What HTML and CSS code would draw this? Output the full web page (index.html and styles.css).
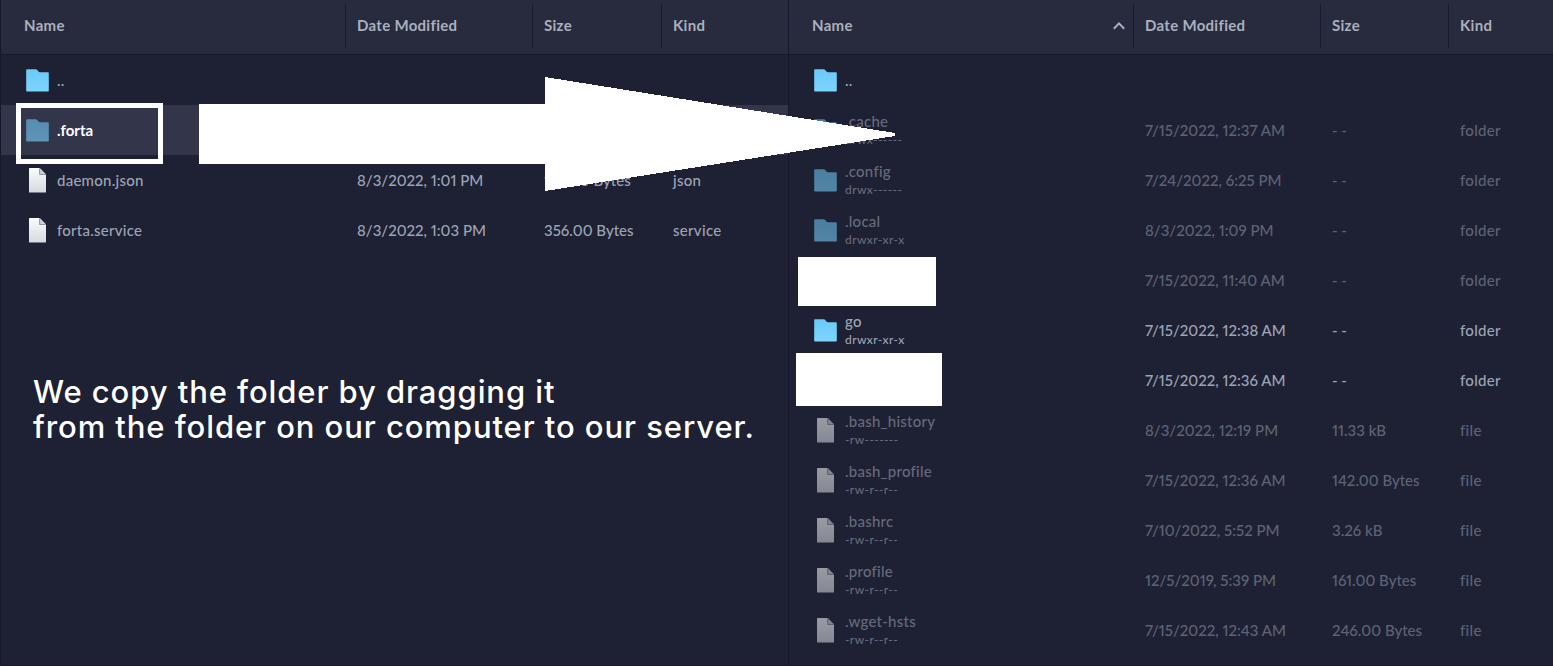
FILE: index.html
```html
<!DOCTYPE html>
<html lang="en">
<head>
<meta charset="utf-8">
<title>File transfer</title>
<link rel="stylesheet" href="styles.css">
</head>
<body>
<svg class="defs" width="0" height="0">
  <defs>
    <linearGradient id="blue" x1="0" y1="0" x2="0" y2="1"><stop offset="0" stop-color="#6bcaf8"/><stop offset="1" stop-color="#7dd4fd"/></linearGradient>
    <linearGradient id="paper" x1="0" y1="0" x2="0" y2="1"><stop offset="0" stop-color="#fbfcfd"/><stop offset="1" stop-color="#d3dade"/></linearGradient>
    <symbol id="folder" viewBox="0 0 24 24"><path fill="url(#blue)" d="M1 .3H9.8Q10.6 .3 11.2 1L12.2 2.2Q13 3.2 14 3.2H22Q22.8 3.2 22.8 4V21.7Q22.8 22.5 22 22.5H1Q.2 22.5 .2 21.7V1.1Q.2 .3 1 .3Z"/></symbol>
    <symbol id="file" viewBox="0 0 24 26"><path fill="url(#paper)" d="M3.6 0H13.6L20 6.5V24.2Q20 24.6 19.6 24.6H3.6Q3 24.6 3 24.2V.5Q3 0 3.6 0Z"/><path fill="#c8d0d6" d="M13.6 0L20 6.5H13.6Z"/><path fill="none" stroke="#6c7682" stroke-width=".7" d="M13.6 .3V6.5L19.8 6.5"/></symbol>
  </defs>
</svg>
<main class="app">
  <section class="pane local">
    <header class="grid head"><div>Name</div><div>Date Modified</div><div>Size</div><div>Kind</div></header>
    <div class="grid row"><div class="name"><svg class="icon"><use href="#folder"/></svg><span class="label dots">..</span></div></div>
    <div class="grid row selected"><div class="name"><svg class="icon faded"><use href="#folder"/></svg><span class="label">.forta</span></div></div>
    <div class="grid row"><div class="name"><svg class="icon"><use href="#file"/></svg><span class="label">daemon.json</span></div><div class="date">8/3/2022, 1:01 PM</div><div class="size">172.00 Bytes</div><div>json</div></div>
    <div class="grid row"><div class="name"><svg class="icon"><use href="#file"/></svg><span class="label">forta.service</span></div><div class="date">8/3/2022, 1:03 PM</div><div class="size">356.00 Bytes</div><div>service</div></div>
  </section>
  <section class="pane remote">
    <header class="grid head"><div class="sorted">Name<svg class="caret" viewBox="0 0 14 10"><path d="M1.8 7.8L7 2.4L12.2 7.8"/></svg></div><div>Date Modified</div><div>Size</div><div>Kind</div></header>
    <div class="grid row"><div class="name"><svg class="icon"><use href="#folder"/></svg><span class="label dots">..</span></div></div>
    <div class="grid row dim"><div class="name"><svg class="icon"><use href="#folder"/></svg><span class="label">.cache<small>drwx------</small></span></div><div class="date">7/15/2022, 12:37 AM</div><div class="size">- -</div><div>folder</div></div>
    <div class="grid row dim"><div class="name"><svg class="icon"><use href="#folder"/></svg><span class="label">.config<small>drwx------</small></span></div><div class="date">7/24/2022, 6:25 PM</div><div class="size">- -</div><div>folder</div></div>
    <div class="grid row dim"><div class="name"><svg class="icon"><use href="#folder"/></svg><span class="label">.local<small>drwxr-xr-x</small></span></div><div class="date">8/3/2022, 1:09 PM</div><div class="size">- -</div><div>folder</div></div>
    <div class="grid row dim"><div class="name"></div><div class="date">7/15/2022, 11:40 AM</div><div class="size">- -</div><div>folder</div></div>
    <div class="grid row"><div class="name"><svg class="icon"><use href="#folder"/></svg><span class="label">go<small>drwxr-xr-x</small></span></div><div class="date">7/15/2022, 12:38 AM</div><div class="size">- -</div><div>folder</div></div>
    <div class="grid row"><div class="name"></div><div class="date">7/15/2022, 12:36 AM</div><div class="size">- -</div><div>folder</div></div>
    <div class="grid row dim"><div class="name"><svg class="icon"><use href="#file"/></svg><span class="label">.bash_history<small>-rw-------</small></span></div><div class="date">8/3/2022, 12:19 PM</div><div class="size">11.33 kB</div><div>file</div></div>
    <div class="grid row dim"><div class="name"><svg class="icon"><use href="#file"/></svg><span class="label">.bash_profile<small>-rw-r--r--</small></span></div><div class="date">7/15/2022, 12:36 AM</div><div class="size">142.00 Bytes</div><div>file</div></div>
    <div class="grid row dim"><div class="name"><svg class="icon"><use href="#file"/></svg><span class="label">.bashrc<small>-rw-r--r--</small></span></div><div class="date">7/10/2022, 5:52 PM</div><div class="size">3.26 kB</div><div>file</div></div>
    <div class="grid row dim"><div class="name"><svg class="icon"><use href="#file"/></svg><span class="label">.profile<small>-rw-r--r--</small></span></div><div class="date">12/5/2019, 5:39 PM</div><div class="size">161.00 Bytes</div><div>file</div></div>
    <div class="grid row dim"><div class="name"><svg class="icon"><use href="#file"/></svg><span class="label">.wget-hsts<small>-rw-r--r--</small></span></div><div class="date">7/15/2022, 12:43 AM</div><div class="size">246.00 Bytes</div><div>file</div></div>
  </section>
  <svg class="arrow" viewBox="0 0 696 114" shape-rendering="crispEdges"><path fill="#fff" d="M0 27H346V0L696 56V59L346 114V87H0Z"/></svg>
  <div class="highlight"></div>
  <div class="cover cover-a"></div>
  <div class="cover cover-b"></div>
  <p class="note"><span class="line">We copy the folder by dragging it</span><span class="line">from the folder on our computer to our server.</span></p>
</main>
</body>
</html>
```
FILE: styles.css
```css
* { box-sizing: border-box; }
body { margin: 0; background: #1e2033; }
.defs { position: absolute; }
.app {
  position: relative;
  display: flex;
  width: 1553px;
  height: 666px;
  overflow: hidden;
  background: #1e2033;
  border-bottom: 1px solid #17182b;
  color: #9da5b5;
  font: 500 15px/20px Lato, "Open Sans", sans-serif;
  font-variant-numeric: proportional-nums;
}
.pane { border-left: 1px solid #15172b; }
.local { width: 788px; }
.remote { flex: 1; }
.grid { display: grid; grid-template-columns: 344px 187px 129px 1fr; align-items: center; }
.remote .grid { grid-template-columns: 344px 187px 128px 1fr; }
.head {
  height: 55px;
  padding-bottom: 2px;
  background: #282a3d;
  border-bottom: 1px solid #15172b;
  color: #a9b0be;
  font-weight: 700;
  letter-spacing: .3px;
}
.head > div { height: 44px; line-height: 43px; padding-left: 11px; border-left: 1px solid #17192c; }
.head > div:first-child { padding-left: 23px; border-left: 0; }
.head > .sorted { display: flex; justify-content: space-between; align-items: center; padding: 0 7px 1px 0; }
.caret { width: 14px; height: 10px; fill: none; stroke: #a9b0be; stroke-width: 2; }
.row { height: 50px; }
.row > div { padding-left: 12px; letter-spacing: .3px; }
.row > .date { letter-spacing: 0; }
.row > .size { letter-spacing: 0; }
.row > .name { display: flex; align-items: center; height: 50px; padding: 0 0 0 25px; letter-spacing: .25px; }
.icon { width: 24px; height: 26px; margin-top: 1px; }
.label { margin: -1px 0 0 7px; }
.dots { padding-top: 1px; }
small { display: block; font-size: 12px; line-height: 15px; letter-spacing: .4px; position: relative; top: 1px; }
.dim .label, .label:has(small) { margin-top: -3px; }
.selected { background: #33354a; color: #fff; font-weight: 700; }
.selected .label { letter-spacing: 0; }
.faded { opacity: .6; }
.dim > div { opacity: .5; }
.dim > .name { opacity: .56; }
.arrow { position: absolute; left: 199px; top: 77px; width: 696px; height: 114px; }
.highlight { position: absolute; left: 16px; top: 103px; width: 147px; height: 61px; border: 5px solid #fff; }
.cover { position: absolute; background: #fff; }
.cover-a { left: 798px; top: 257px; width: 138px; height: 49px; }
.cover-b { left: 796px; top: 353px; width: 146px; height: 53px; }
.note {
  position: absolute;
  left: 33px;
  top: 374px;
  margin: 0;
  color: #fff;
  font: 500 31px/35px Inter, sans-serif;
  letter-spacing: .92px;
  white-space: nowrap;
}
.line { display: block; }
```
